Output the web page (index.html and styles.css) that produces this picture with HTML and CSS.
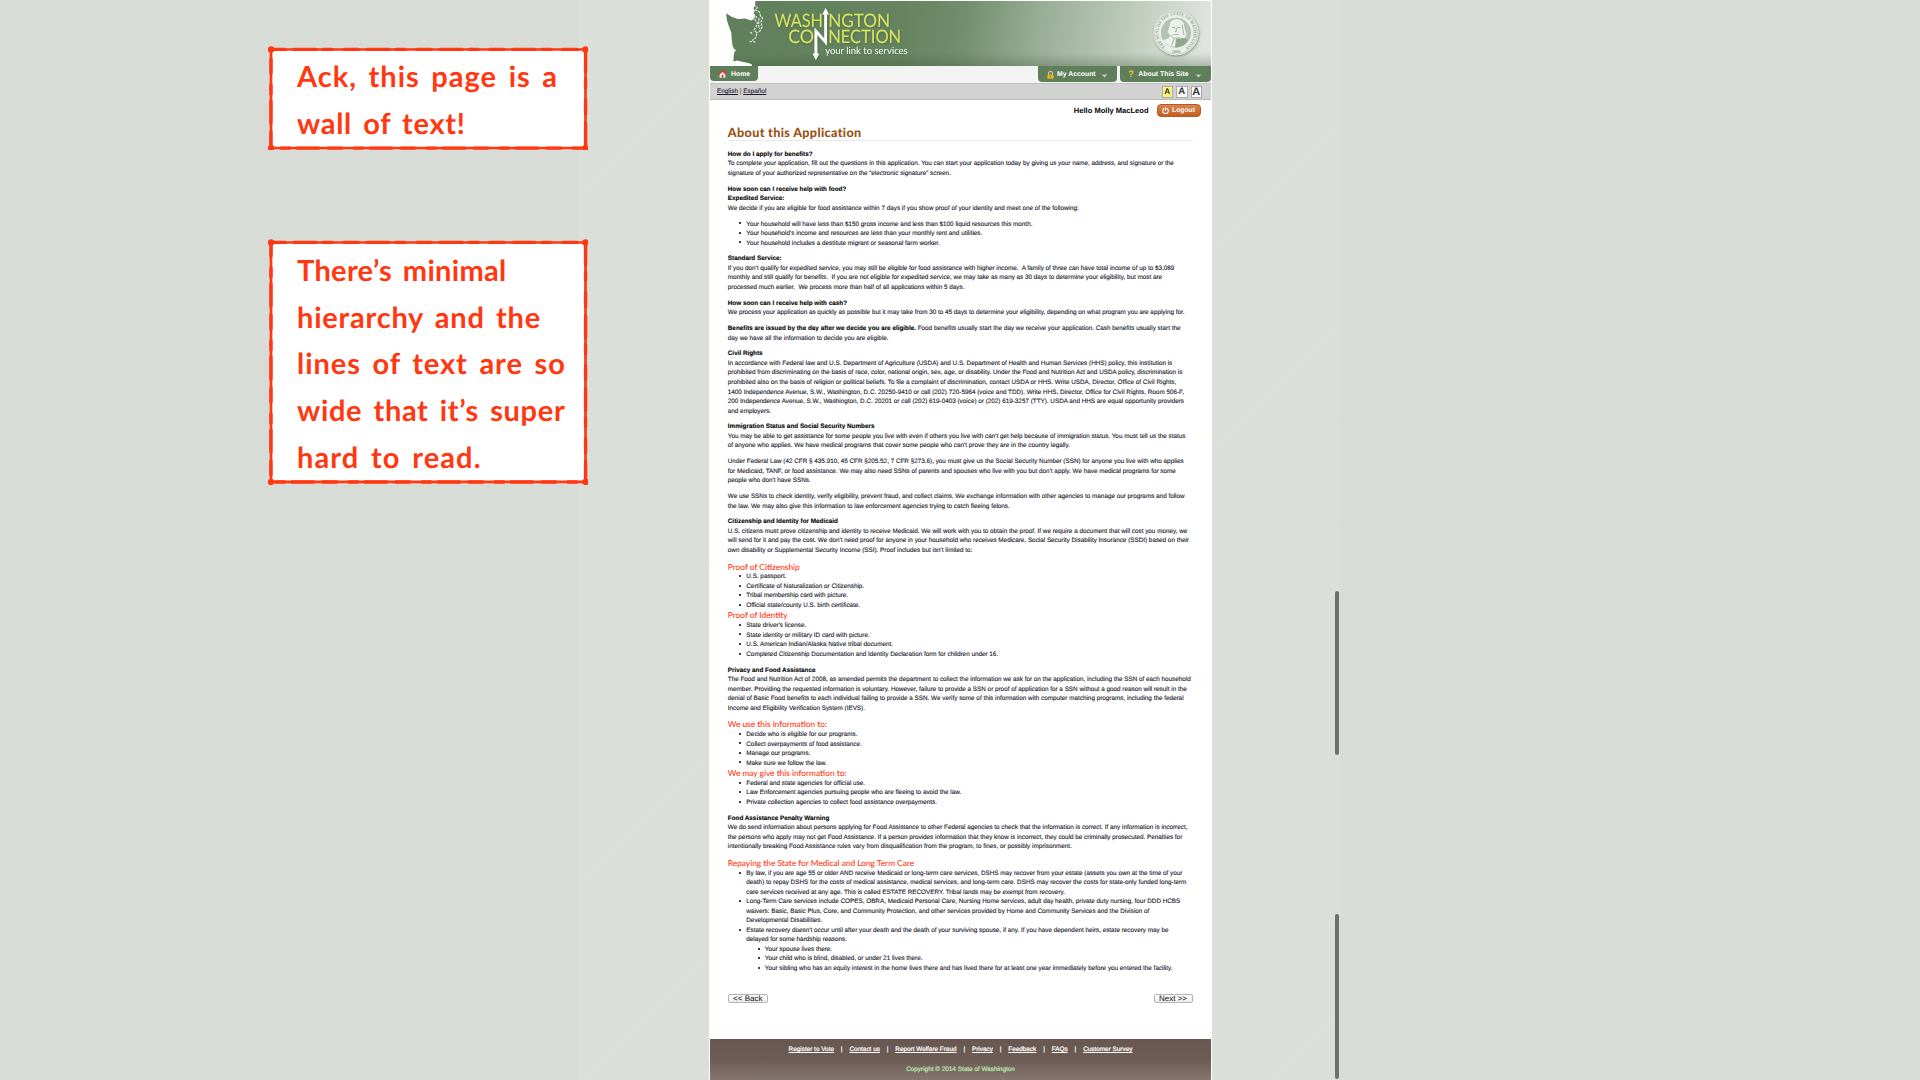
FILE: index.html
```html
<!DOCTYPE html>
<html lang="en">
<head>
<meta charset="utf-8">
<title>About this Application</title>
<link rel="stylesheet" href="styles.css">
</head>
<body>
<div class="browser">
  <div class="page">
    <header class="banner">
      <svg class="banner-art" width="501" height="66" viewBox="0 0 501 66">
        <defs>
          <path id="ring" d="M455.6 46.8 A17.6 17.6 0 1 1 476.4 46.8"/>
          <filter id="glow" x="-20%" y="-20%" width="140%" height="140%"><feDropShadow dx="0.6" dy="1" stdDeviation="1.2" flood-color="#3f5a3c" flood-opacity=".6"/></filter>
        </defs>
        <path fill="#fff" d="M0 0H45.5L45 5L43.6 8L44.8 11L43.6 13L45 16L44 19L41 20.5L38 19.5L35 18.5L28 19L22 17L16.2 13.2L16.8 20L19 26.5L21.4 33L21.8 40L22.6 46L24 49L26 50L24 53L23.4 61.5L27 60.5L31 61.5L36 62.5L41.5 64L42 66H0Z"/>
        <path fill="none" stroke="#fff" stroke-opacity=".85" stroke-width="1.1" stroke-linejoin="round" stroke-dasharray="2.6 .9" d="M44 5L47.5 7.5L45.5 10L49.5 12L50.5 16L52.500 18L51 22L52 27L50 31L47.500 32.500M43 14L46.500 17L45 20L47.500 23L46 27L44 30L47 33L45.500 38L42 40.500M49 18L48.500 25L49.500 29M40 32L43 34M39.500 41.500L46 42"/>
        <g class="logo" filter="url(#glow)">
          <g class="logo-name">
            <text x="64.5" y="27.400" textLength="48.5" lengthAdjust="spacingAndGlyphs">WASH</text>
            <text x="118.2" y="27.400" textLength="62" lengthAdjust="spacingAndGlyphs">NGTON</text>
            <text x="78.2" y="42.9" textLength="26" lengthAdjust="spacingAndGlyphs">CO</text>
            <text x="118.2" y="42.9" textLength="73" lengthAdjust="spacingAndGlyphs">NECTION</text>
          </g>
          <path fill="none" stroke="#fff" stroke-width="2.8" d="M105.9 55V31.2L115.6 42V13"/>
          <path fill="#fff" d="M115.6 8L119 14.5H112.2ZM105.9 60L102.5 53.5H109.3Z"/>
          <text class="logo-tag" x="115.2" y="54" textLength="82.5" lengthAdjust="spacingAndGlyphs">your link to services</text>
        </g>
        <g filter="url(#glow)">
          <circle cx="466" cy="32.7" r="22.5" fill="#e9eee8"/>
          <circle cx="466" cy="32.7" r="21.4" fill="none" stroke="#a9bba6" stroke-width=".5"/>
        </g>
        <circle cx="466" cy="32.7" r="15" fill="#b3c3b1"/>
        <path fill="#edf1ec" d="M459.5 27Q459 20.5 465 19.3Q471 18.5 473.6 23L474.5 28L476.5 34L474.8 39L470 38L472 44Q467 48 458.5 45.6L452.5 40.5L459 38L460 35L457.5 32Z"/>
        <path fill="none" stroke="#8fa58c" stroke-width=".8" d="M462 27.5H465M467.5 27.5H470M466.3 28V31.5H465M463.5 34.5H468.5M460 35L464 38.5L470 37.5M464 39L461.5 45.5M472 24.5L474 35"/>
        <path fill="#8fa58c" d="M466 39L474.5 38Q478.500 39 477 42Q472.500 47 465 47.500Z"/>
        <text class="seal-text"><textPath href="#ring" textLength="89">THE SEAL OF THE STATE OF WASHINGTON</textPath></text>
        <text class="seal-text" x="466" y="53.2" text-anchor="middle">1889</text>
      </svg>
    </header>
    <nav class="nav">
      <a class="tab home">
        <svg width="9" height="8" viewBox="0 0 9 8"><path fill="#eee" d="M1.6 4L4.5 1.400L7.4 4V7.700H1.6Z"/><path fill="none" stroke="#d8392b" stroke-width="1.4" d="M.4 4.500L4.500 .9L8.600 4.500"/><path fill="#d8392b" d="M6.500 .6H7.700V3H6.500ZM3.700 4.800H5.400V7.700H3.700Z"/></svg>
        <span>Home</span>
      </a>
      <span class="spacer"></span>
      <a class="tab account">
        <svg width="7" height="8" viewBox="0 0 7 8"><path fill="none" stroke="#c9c9c9" stroke-width="1.100" d="M1.500 4V2.500A2 2 0 0 1 5.500 2.500V4"/><rect x=".3" y="3.400" width="6.400" height="4.400" rx="1.500" fill="#f2b21d"/><path stroke="#8b6310" stroke-width=".8" d="M3.500 4.800V6.300"/></svg>
        <span>My Account</span>
        <svg class="caret" width="7" height="4" viewBox="0 0 7 4"><path fill="#c9cfd6" stroke="#7d8d80" stroke-width=".6" d="M.4 .4H6.600L3.500 3.600Z"/></svg>
      </a>
      <a class="tab about">
        <b class="question">?</b>
        <span>About This Site</span>
        <svg class="caret" width="7" height="4" viewBox="0 0 7 4"><path fill="#c9cfd6" stroke="#7d8d80" stroke-width=".6" d="M.4 .4H6.600L3.500 3.600Z"/></svg>
      </a>
    </nav>
    <div class="tools">
      <span class="langs"><u>English</u> <i>|</i> <u>Español</u></span>
      <span class="sizes"><b class="size s on">A</b><b class="size m">A</b><b class="size l">A</b></span>
    </div>
    <div class="user">
      <b>Hello Molly MacLeod</b>
      <span class="logout">
        <svg width="7" height="7" viewBox="0 0 7 7"><path fill="none" stroke="#fff" stroke-width="1.100" stroke-linecap="round" d="M2 1.500A2.800 2.800 0 1 0 5 1.500M3.500 .7V3.300"/></svg>
        Logout
      </span>
    </div>
    <main class="content">
      <h1>About this Application</h1>
      <p><b>How do I apply for benefits?</b><br>
        To complete your application, fill out the questions in this application. You can start your application today by giving us your name, address, and signature or the<br>
        signature of your authorized representative on the “electronic signature” screen.</p>
      <p><b>How soon can I receive help with food?</b><br>
        <b>Expedited Service:</b><br>
        We decide if you are eligible for food assistance within 7 days if you show proof of your identity and meet one of the following:</p>
      <ul class="spaced">
        <li>Your household will have less than $150 gross income and less than $100 liquid resources this month.</li>
        <li>Your household's income and resources are less than your monthly rent and utilities.</li>
        <li>Your household includes a destitute migrant or seasonal farm worker.</li>
      </ul>
      <p><b>Standard Service:</b><br>
        If you don't qualify for expedited service, you may still be eligible for food assistance with higher income.&nbsp; A family of three can have total income of up to $3,089<br>
        monthly and still qualify for benefits.&nbsp; If you are not eligible for expedited service, we may take as many as 30 days to determine your eligibility, but most are<br>
        processed much earlier.&nbsp; We process more than half of all applications within 5 days.</p>
      <p><b>How soon can I receive help with cash?</b><br>
        We process your application as quickly as possible but it may take from 30 to 45 days to determine your eligibility, depending on what program you are applying for.</p>
      <p><b>Benefits are issued by the day after we decide you are eligible.</b> Food benefits usually start the day we receive your application. Cash benefits usually start the<br>
        day we have all the information to decide you are eligible.</p>
      <p><b>Civil Rights</b><br>
        In accordance with Federal law and U.S. Department of Agriculture (USDA) and U.S. Department of Health and Human Services (HHS) policy, this institution is<br>
        prohibited from discriminating on the basis of race, color, national origin, sex, age, or disability. Under the Food and Nutrition Act and USDA policy, discrimination is<br>
        prohibited also on the basis of religion or political beliefs. To file a complaint of discrimination, contact USDA or HHS. Write USDA, Director, Office of Civil Rights,<br>
        1400 Independence Avenue, S.W., Washington, D.C. 20250-9410 or call (202) 720-5964 (voice and TDD). Write HHS, Director, Office for Civil Rights, Room 506-F,<br>
        200 Independence Avenue, S.W., Washington, D.C. 20201 or call (202) 619-0403 (voice) or (202) 619-3257 (TTY). USDA and HHS are equal opportunity providers<br>
        and employers.</p>
      <p><b>Immigration Status and Social Security Numbers</b><br>
        You may be able to get assistance for some people you live with even if others you live with can't get help because of immigration status. You must tell us the status<br>
        of anyone who applies. We have medical programs that cover some people who can't prove they are in the country legally.</p>
      <p>Under Federal Law (42 CFR § 435.910, 45 CFR §205.52, 7 CFR §273.6), you must give us the Social Security Number (SSN) for anyone you live with who applies<br>
        for Medicaid, TANF, or food assistance. We may also need SSNs of parents and spouses who live with you but don't apply. We have medical programs for some<br>
        people who don't have SSNs.</p>
      <p>We use SSNs to check identity, verify eligibility, prevent fraud, and collect claims. We exchange information with other agencies to manage our programs and follow<br>
        the law. We may also give this information to law enforcement agencies trying to catch fleeing felons.</p>
      <p><b>Citizenship and Identity for Medicaid</b><br>
        U.S. citizens must prove citizenship and identity to receive Medicaid. We will work with you to obtain the proof. If we require a document that will cost you money, we<br>
        will send for it and pay the cost. We don't need proof for anyone in your household who receives Medicare, Social Security Disability Insurance (SSDI) based on their<br>
        own disability or Supplemental Security Income (SSI). Proof includes but isn't limited to:</p>
      <h2>Proof of Citizenship</h2>
      <ul>
        <li>U.S. passport.</li>
        <li>Certificate of Naturalization or Citizenship.</li>
        <li>Tribal membership card with picture.</li>
        <li>Official state/county U.S. birth certificate.</li>
      </ul>
      <h2>Proof of Identity</h2>
      <ul class="spaced">
        <li>State driver's license.</li>
        <li>State identity or military ID card with picture.</li>
        <li>U.S. American Indian/Alaska Native tribal document.</li>
        <li>Completed Citizenship Documentation and Identity Declaration form for children under 16.</li>
      </ul>
      <p><b>Privacy and Food Assistance</b><br>
        The Food and Nutrition Act of 2008, as amended permits the department to collect the information we ask for on the application, including the SSN of each household<br>
        member. Providing the requested information is voluntary. However, failure to provide a SSN or proof of application for a SSN without a good reason will result in the<br>
        denial of Basic Food benefits to each individual failing to provide a SSN. We verify some of this information with computer matching programs, including the federal<br>
        Income and Eligibility Verification System (IEVS).</p>
      <h2>We use this information to:</h2>
      <ul>
        <li>Decide who is eligible for our programs.</li>
        <li>Collect overpayments of food assistance.</li>
        <li>Manage our programs.</li>
        <li>Make sure we follow the law.</li>
      </ul>
      <h2>We may give this information to:</h2>
      <ul class="spaced">
        <li>Federal and state agencies for official use.</li>
        <li>Law Enforcement agencies pursuing people who are fleeing to avoid the law.</li>
        <li>Private collection agencies to collect food assistance overpayments.</li>
      </ul>
      <p><b>Food Assistance Penalty Warning</b><br>
        We do send information about persons applying for Food Assistance to other Federal agencies to check that the information is correct. If any information is incorrect,<br>
        the persons who apply may not get Food Assistance. If a person provides information that they know is incorrect, they could be criminally prosecuted. Penalties for<br>
        intentionally breaking Food Assistance rules vary from disqualification from the program, to fines, or possibly imprisonment.</p>
      <h2>Repaying the State for Medical and Long Term Care</h2>
      <ul>
        <li>By law, if you are age 55 or older AND receive Medicaid or long-term care services, DSHS may recover from your estate (assets you own at the time of your<br>
          death) to repay DSHS for the costs of medical assistance, medical services, and long-term care. DSHS may recover the costs for state-only funded long-term<br>
          care services received at any age. This is called ESTATE RECOVERY. Tribal lands may be exempt from recovery.</li>
        <li>Long-Term Care services include COPES, OBRA, Medicaid Personal Care, Nursing Home services, adult day health, private duty nursing, four DDD HCBS<br>
          waivers: Basic, Basic Plus, Core, and Community Protection, and other services provided by Home and Community Services and the Division of<br>
          Developmental Disabilities.</li>
        <li>Estate recovery doesn't occur until after your death and the death of your surviving spouse, if any. If you have dependent heirs, estate recovery may be<br>
          delayed for some hardship reasons.
          <ul>
            <li>Your spouse lives there.</li>
            <li>Your child who is blind, disabled, or under 21 lives there.</li>
            <li>Your sibling who has an equity interest in the home lives there and has lived there for at least one year immediately before you entered the facility.</li>
          </ul>
        </li>
      </ul>
      <div class="pager">
        <span class="btn back">&lt;&lt; Back</span>
        <span class="btn next">Next &gt;&gt;</span>
      </div>
    </main>
    <footer class="footer">
      <div class="links"><u>Register to Vote</u><i>|</i><u>Contact us</u><i>|</i><u>Report Welfare Fraud</u><i>|</i><u>Privacy</u><i>|</i><u>Feedback</u><i>|</i><u>FAQs</u><i>|</i><u>Customer Survey</u></div>
      <div class="copyright">Copyright © 2014 State of Washington</div>
    </footer>
  </div>
  <span class="scroll first"></span>
  <span class="scroll second"></span>
</div>

<aside class="note note-a">
  <svg class="frame" width="320" height="104" viewBox="0 0 320 104">
    <path class="line" d="M3 3.500H317.500V102H3Z"/>
    <path class="rough" d="M3 3.400H317.600V102.100H2.900Z"/>
    <path class="dots" d="M3 3.500h0M317.500 3.500h0M317.500 102h0M3 102h0"/>
  </svg>
  <p><span class="a1">Ack, this page is a</span><br><span class="a2">wall of text!</span></p>
</aside>
<aside class="note note-b">
  <svg class="frame" width="320" height="246" viewBox="0 0 320 246">
    <path class="line" d="M3 3.500H317.500V242.900H3Z"/>
    <path class="rough" d="M3 3.400H317.600V243H2.900Z"/>
    <path class="dots" d="M3 3.500h0M317.500 3.500h0M317.500 242.900h0M3 242.900h0"/>
  </svg>
  <p><span class="b1">There’s minimal</span><br><span class="b2">hierarchy and the</span><br><span class="b3">lines of text are so</span><br><span class="b4">wide that it’s super</span><br><span class="b5">hard to read.</span></p>
</aside>
</body>
</html>
```
FILE: styles.css
```css
* { box-sizing: border-box; }
body {
  margin: 0;
  width: 1920px;
  height: 1080px;
  overflow: hidden;
  position: relative;
  background: #d7dcd6;
  font-family: "Liberation Sans", Arial, sans-serif;
  text-rendering: geometricPrecision;
}
i { font-style: normal; }

.browser {
  position: relative;
  width: 761px;
  height: 1080px;
  margin-left: 579px;
  padding-left: 130px;
  background: repeating-linear-gradient(135deg, #dce1db 0 1.4px, #d8ddd7 1.4px 2.8px);
}
.page {
  width: 503px;
  height: 1080px;
  padding: 1px 1px 1px;
  background: #fff;
  display: flex;
  flex-direction: column;
}

.banner {
  height: 65px;
  flex: none;
  overflow: hidden;
  background:
    linear-gradient(180deg, rgba(60,85,55,0) 80%, rgba(60,85,55,.3) 100%),
    linear-gradient(98deg, #5f7f5a 0%, #65845f 38%, #718d6c 50%, #9aaf97 66%, #bcc9ba 82%, #dfe4de 98%);
}
.banner-art { display: block; margin-top: -1px; }
.logo-name text { font: 400 18.500px Lato, sans-serif; fill: #d9e35f; }
.logo-tag { font: 400 9.8px Lato, sans-serif; fill: #f4f7f2; }
.seal-text { font: 700 4.3px "Liberation Serif", serif; fill: #8fa58c; }

.nav {
  height: 17px;
  flex: none;
  display: flex;
  align-items: flex-start;
  background: #f3f3f3;
}
.spacer { flex: 1; }
.tab {
  display: flex;
  align-items: center;
  height: 16px;
  padding-top: 1px;
  color: #fff;
  background: #5f7f5a;
  border-radius: 0 0 4px 4px;
  font-size: 6.860px;
  font-weight: 700;
  white-space: nowrap;
}
.home { width: 48px; height: 15px; padding-left: 7.500px; gap: 4.500px; }
.account { width: 79px; padding-left: 8.500px; gap: 3.500px; margin-right: 3px; }
.about { width: 91px; padding-left: 8px; gap: 4.500px; }
.tab .caret { margin: 2px 0 0 1.500px; }
.question { color: #f4bb22; font-size: 9.500px; }

.tools {
  height: 17px;
  flex: none;
  display: flex;
  align-items: center;
  justify-content: space-between;
  padding: 0 9px 0 7px;
  background: #d2d2d2;
  border-top: 1px solid #c2c2c2;
  border-bottom: 1px solid #b9b9b9;
}
.langs { font-size: 6.400px; color: #1d1d30; -webkit-text-stroke: .1px currentColor; }
.langs i { color: #8c3a18; }
.sizes { display: flex; gap: 3px; }
.size {
  width: 11.500px;
  height: 12px;
  display: flex;
  align-items: center;
  justify-content: center;
  background: #fbfbfb;
  border: 1px solid #aaa;
  color: #333;
}
.size.on { background: #fbf67c; }
.size.s { font-size: 8.200px; }
.size.m { font-size: 9.600px; }
.size.l { font-size: 11px; }

.user {
  height: 20px;
  flex: none;
  display: flex;
  justify-content: flex-end;
  align-items: center;
  gap: 8px;
  padding: 0 10.500px 0 0;
  font-size: 7.550px;
  color: #000;
}
.logout {
  width: 44px;
  height: 13px;
  display: flex;
  align-items: center;
  justify-content: center;
  gap: 3px;
  border: .5px solid #b35a22;
  border-radius: 4px;
  background: linear-gradient(#dc8450, #c25f1d);
  color: #fff;
  font-size: 6.800px;
  font-weight: 700;
}

.content {
  height: 919px;
  flex: none;
  padding: 6px 18.500px 0 17.800px;
  color: #14141f;
  font-size: 6.345px;
  line-height: 9.520px;
  white-space: nowrap;
  -webkit-text-stroke: .1px currentColor;
}
.content h1 {
  margin: 0 0 9.400px;
  height: 14.500px;
  border-bottom: 1px solid #e9e9e9;
  color: #9c5212;
  font: 900 12.600px/14px Lato, sans-serif;
  letter-spacing: .35px;
  -webkit-text-stroke: 0;
}
.content h2 {
  margin: 0;
  height: 10.700px;
  color: #ff3c14;
  font: 400 8.330px/10.700px Lato, sans-serif;
  -webkit-text-stroke: .1px #ff3c14;
}
.content p { margin: 0 0 6.300px; }
.content b { color: #000; }
.content ul { margin: 0; padding: 0 0 0 18.500px; list-style: none; }
.content ul.spaced { margin-bottom: 6.300px; }
.content li::before {
  content: "";
  display: inline-block;
  width: 2px;
  height: 2px;
  margin: 0 5px 0 -7px;
  border-radius: 50%;
  background: #000;
  vertical-align: 1.200px;
}

.pager { display: flex; justify-content: space-between; margin-top: 21px; -webkit-text-stroke: 0; }
.btn {
  height: 9px;
  border: 1px solid #b4b4b4;
  border-radius: 2px;
  background: linear-gradient(#fff, #ececec);
  color: #111;
  font-size: 8px;
  line-height: 8px;
  text-align: center;
}
.back { width: 40px; }
.next { width: 39px; }

.footer {
  flex: 1;
  padding-top: 1px;
  background: linear-gradient(#695851 0%, #6d5c55 50%, #85766f 100%);
  color: #fff;
  font-size: 6.380px;
  text-align: center;
  -webkit-text-stroke: .2px currentColor;
}
.links { display: flex; justify-content: center; gap: 6.900px; height: 20px; line-height: 20px; }
.copyright { height: 20px; line-height: 20px; color: #b9e8ae; }

.scroll { position: absolute; left: 756px; width: 4px; border-radius: 2px; background: #6c706c; }
.first { top: 591px; height: 164px; }
.second { top: 914px; height: 165px; }

.note { position: absolute; left: 268px; width: 320px; }
.note-a { top: 46px; height: 104px; }
.note-b { top: 239px; height: 246px; }
.frame { position: absolute; inset: 0; }
.line { fill: #fff; stroke: #ff3812; stroke-width: 2.700; }
.rough { fill: none; stroke: #ff3812; stroke-width: 3.400; stroke-linecap: round; stroke-dasharray: 14 9 22 7 9 12; }
.dots { stroke: #ff3812; stroke-width: 6.500; stroke-linecap: round; }
.note p {
  position: relative;
  margin: 0;
  padding: 8px 0 0 29px;
  color: #ff3812;
  font: 700 29px/46.700px Lato, sans-serif;
  word-spacing: 3.500px;
  white-space: nowrap;
}
.note-b p { padding-top: 9px; }
.a1 { letter-spacing: 1px; }
.a2 { letter-spacing: .7px; }
.b1 { letter-spacing: .3px; }
.b2 { letter-spacing: .78px; }
.b3 { letter-spacing: .97px; }
.b4 { letter-spacing: .66px; }
.b5 { letter-spacing: 1.100px; }
```
